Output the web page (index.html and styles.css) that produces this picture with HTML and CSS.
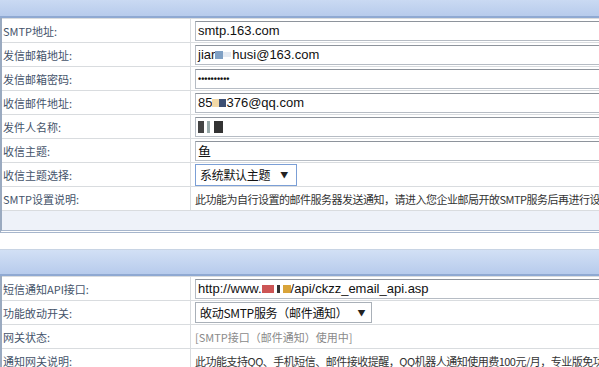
FILE: index.html
```html
<!DOCTYPE html>
<html>
<head>
<meta charset="utf-8">
<link rel="stylesheet" href="styles.css">
</head>
<body>
<div class="page">
  <section class="panel panel-first">
    <div class="panel-head"></div>
    <div class="rows">
      <div class="row"><div class="label">SMTP地址:</div><div class="value"><div class="input">smtp.163.com</div></div></div>
      <div class="row"><div class="label">发信邮箱地址:</div><div class="value"><div class="input">jiar<span class="blur b1"></span><span class="blur b2"></span>husi@163.com</div></div></div>
      <div class="row"><div class="label">发信邮箱密码:</div><div class="value"><div class="input pw">••••••••••</div></div></div>
      <div class="row"><div class="label">收信邮件地址:</div><div class="value"><div class="input">85<span class="blur b3"></span><span class="blur b4"></span>376@qq.com</div></div></div>
      <div class="row"><div class="label">发件人名称:</div><div class="value"><div class="input"><span class="blur b5"></span><span class="blur b6"></span><span class="blur b7"></span></div></div></div>
      <div class="row"><div class="label">收信主题:</div><div class="value"><div class="input">鱼</div></div></div>
      <div class="row"><div class="label">收信主题选择:</div><div class="value"><div class="select sel-focus">系统默认主题<span class="arrow">▼</span></div></div></div>
      <div class="row"><div class="label">SMTP设置说明:</div><div class="value note">此功能为自行设置的邮件服务器发送通知，请进入您企业邮局开敀SMTP服务后再进行设置</div></div>
      <div class="foot"></div>
    </div>
  </section>
  <section class="panel panel-second">
    <div class="panel-head"></div>
    <div class="rows">
      <div class="row"><div class="label">短信通知API接口:</div><div class="value"><div class="input">http://www.<span class="blur b8"></span><span class="blur b9"></span><span class="blur b10"></span>/api/ckzz_email_api.asp</div></div></div>
      <div class="row"><div class="label">功能敀动开关:</div><div class="value"><div class="select">敀动SMTP服务（邮件通知）<span class="arrow">▼</span></div></div></div>
      <div class="row"><div class="label">网关状态:</div><div class="value status">[SMTP接口（邮件通知）使用中]</div></div>
      <div class="row"><div class="label">通知网关说明:</div><div class="value note">此功能支持QQ、手机短信、邮件接收提醒，QQ机器人通知使用费100元/月，专业版免功能费</div></div>
    </div>
  </section>
</div>
</body>
</html>
```
FILE: styles.css
```css
html, body {
  margin: 0;
  padding: 0;
  background: #fff;
  overflow: hidden;
}
body {
  font-family: "Noto Sans CJK SC", "Liberation Sans", sans-serif;
  font-size: 11px;
  color: #333;
}
.page {
  width: 599px;
  height: 367px;
  overflow: hidden;
  display: flex;
  flex-direction: column;
}
.panel-first {
  margin-top: -8px;
}
.panel-second {
  margin-top: 16px;
}
.panel-head {
  height: 24px;
  background: linear-gradient(#d2e0f5, #b7cbec);
  border-top: 1px solid #c8d4e4;
  border-bottom: 2px solid #8fa9d2;
}
.panel-first .panel-head {
  height: 23px;
}
.rows {
  border-left: 2px solid #9aaac0;
  background: #fff;
}
.panel-first .rows {
  border-bottom: 3px double #a7b6cc;
}
.row {
  display: grid;
  grid-template-columns: 189px 1fr;
  height: 23px;
  border-bottom: 1px solid #d9dcdf;
}
.row:first-child {
  border-top: 1px solid #d9dcdf;
}
.label {
  display: flex;
  align-items: center;
  padding-left: 1px;
  border-right: 1px solid #d9dcdf;
  color: #44536a;
  white-space: nowrap;
  font-size: 11px;
}
.value {
  display: flex;
  align-items: center;
  padding-left: 4px;
  white-space: nowrap;
  overflow: hidden;
}
.input {
  box-sizing: border-box;
  width: 520px;
  height: 20px;
  border: 1px solid #b6bcc4;
  border-top-color: #8e949c;
  background: #fff;
  font-family: "Liberation Sans", "Noto Sans CJK SC", sans-serif;
  font-size: 13px;
  color: #111;
  padding-left: 2px;
  display: flex;
  align-items: center;
  flex-shrink: 0;
}
.input.pw {
  font-size: 9px;
  font-weight: bold;
}
.select {
  box-sizing: border-box;
  height: 21px;
  border: 1px solid #a9b0b8;
  background: #fff;
  font-family: "Noto Sans CJK SC", sans-serif;
  font-size: 12px;
  letter-spacing: -0.3px;
  color: #111;
  padding: 0 6px 0 4px;
  display: flex;
  align-items: center;
  flex-shrink: 0;
}
.sel-focus {
  border-color: #7b9fd6;
  height: 22px;
  padding-right: 8px;
}
.arrow {
  font-size: 8px;
  margin-left: 10px;
  color: #222;
}
.note {
  color: #333;
  font-size: 11px;
  letter-spacing: -0.5px;
}
.status {
  color: #8a8a8a;
  font-size: 11px;
}
.foot {
  height: 19px;
  background: #eef2f9;
}
.blur {
  display: inline-block;
  height: 8px;
  vertical-align: middle;
}
.b1 { width: 8px; background: #7fa0c4; }
.b2 { width: 8px; background: #e4eaf2; margin-right: 1px; height: 5px; }
.b3 { width: 7px; background: #f2d9a6; }
.b4 { width: 7px; background: #3c4f73; }
.b5 { width: 6px; height: 12px; background: #444; margin-right: 3px; }
.b6 { width: 3px; height: 12px; background: #9aa; margin-right: 4px; }
.b7 { width: 9px; height: 12px; background: #333; }
.b8 { width: 12px; background: #c55; }
.b9 { width: 3px; background: #333; margin: 0 3px; }
.b10 { width: 8px; background: #d9a43a; }
```
